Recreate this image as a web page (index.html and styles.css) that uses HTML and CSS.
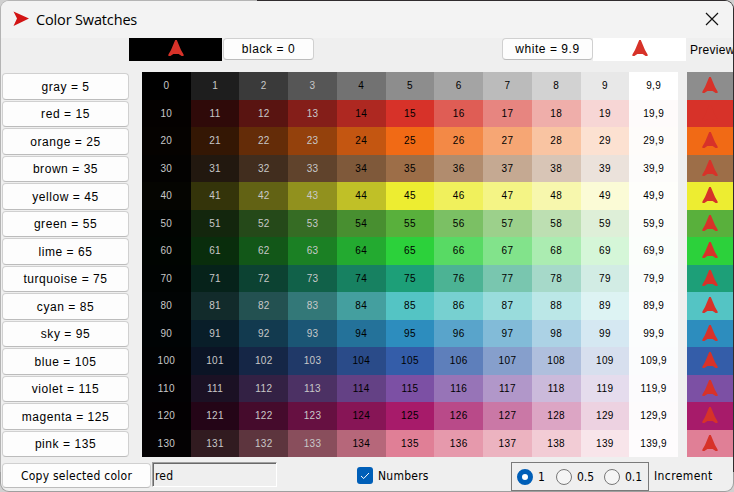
FILE: index.html
```html
<!DOCTYPE html>
<html lang="en">
<head>
<meta charset="utf-8">
<title>Color Swatches</title>
<link rel="stylesheet" href="styles.css">
</head>
<body>
<svg class="defs" width="0" height="0" aria-hidden="true">
  <symbol id="turtle" viewBox="0 0 16 16"><path d="M7.2 0H8.8L13 10L15.6 14.6V16H13.6L10.6 14H5.4L2.4 16H0.4V14.6L3 10Z"/></symbol>
</svg>
<div class="window">
  <header class="titlebar">
    <svg class="app-icon" width="16" height="16" viewBox="0 0 16 16"><path d="M0.5 0.5L16 7.5L0.5 15L4 7.5Z"/></svg>
    <h1>Color Swatches</h1>
    <svg class="close" width="14" height="14" viewBox="0 0 14 14"><path d="M1 1L13 13M13 1L1 13"/></svg>
  </header>
  <div class="top-row">
    <div class="strip strip-black"><svg class="turtle"><use href="#turtle"/></svg></div>
    <button class="btn">black = 0</button>
    <span class="spacer"></span>
    <button class="btn">white = 9.9</button>
    <div class="strip strip-white"><svg class="turtle"><use href="#turtle"/></svg></div>
    <span class="preview-label">Preview</span>
  </div>
  <main class="main">
    <div class="names" id="names"></div>
    <div class="swatches" id="swatches"></div>
    <div class="previews" id="previews"></div>
  </main>
  <footer class="bottom">
    <button class="btn copy">Copy selected color</button>
    <div class="field">red</div>
    <div class="numbers">
      <svg width="16" height="17" viewBox="0 0 16 17"><rect width="16" height="17" rx="3" fill="#005fb8"/><path d="M4 9L6.7 11.5L12 6" fill="none" stroke="#fff"/></svg>
      <span>Numbers</span>
    </div>
    <div class="radios">
      <i class="radio on"></i><span class="r1">1</span>
      <i class="radio"></i><span class="r2">0.5</span>
      <i class="radio"></i><span class="r3">0.1</span>
    </div>
    <span class="increment">Increment</span>
  </footer>
</div>
<script src="swatches.js"></script>
</body>
</html>
```
FILE: styles.css
```css
* { box-sizing: border-box; }
body {
  margin: 0;
  width: 734px;
  height: 492px;
  overflow: hidden;
  background: #d0d0d0;
  font: 12px/14px "DejaVu Sans Condensed", "DejaVu Sans", sans-serif;
  color: #000;
}
.defs { position: absolute; }
.window {
  width: 734px;
  height: 492px;
  overflow: hidden;
  border: 1px solid transparent;
  border-radius: 9px;
  background:
    linear-gradient(#efefef, #efefef) padding-box,
    linear-gradient(#9f9f9f, #9f9f9f) bottom / 100% 20px no-repeat border-box,
    linear-gradient(90deg, #b4b4b4 257px, #302c2e 257px) border-box;
}
.titlebar {
  display: flex;
  align-items: center;
  height: 37px;
  padding: 0 14px 0 12px;
  background: #f3f3f3;
}
.app-icon { margin-top: -1px; fill: #d21414; }
.titlebar h1 {
  flex: 1;
  margin: 0 0 0 7px;
  font: 14.5px/20px "Open Sans", "Noto Sans", sans-serif;
  letter-spacing: -0.15px;
}
.close { margin-top: -1px; fill: none; stroke: #111; stroke-width: 1.2; }
.top-row { display: flex; height: 34px; padding-left: 128px; }
.top-row > * { flex-shrink: 0; }
.strip { display: flex; justify-content: center; width: 93px; height: 23px; padding-top: 2px; }
.strip-black { background: #000; margin-right: 1px; }
.strip-white { background: #fff; }
.turtle { display: block; width: 16px; height: 16px; fill: #d73229; }
.btn {
  width: 91px;
  height: 22px;
  padding: 0;
  background: #fdfdfd;
  border: 1px solid #d0d0d0;
  border-bottom-color: #bcbcbc;
  border-radius: 4px;
  font: 12px/14px "Liberation Sans", sans-serif;
  letter-spacing: 0.55px;
  white-space: nowrap;
}
.spacer { width: 188px; }
.preview-label {
  padding: 5px 0 0 4px;
  font: 12px/14px "Liberation Sans", sans-serif;
  letter-spacing: 0.3px;
  white-space: nowrap;
}
.main { display: flex; height: 385px; }
.names { width: 127px; margin: 1px 13px 0 1px; display: grid; grid-template-rows: repeat(14, 27.5px); }
.names .btn { width: 127px; height: 26.5px; padding-top: 1px; }
.swatches {
  width: 536px;
  display: grid;
  grid-template-columns: repeat(11, 1fr);
  grid-template-rows: repeat(14, 27.5px);
  font: 10px/27px "Liberation Sans", sans-serif;
  letter-spacing: 0.35px;
  text-align: center;
}
.cell.dark { color: #c8c8c8; }
.previews { width: 46px; margin-left: 9px; display: grid; grid-template-rows: repeat(14, 27.5px); }
.preview { padding: 5px 0 0 15px; }
.bottom { display: flex; height: 35px; padding: 5px 0 0 1px; }
.bottom .copy {
  width: 149px;
  height: 25px;
  margin-top: 1px;
  font: inherit;
  letter-spacing: 0.25px;
}
.field {
  width: 125px;
  height: 25px;
  margin-left: 1px;
  padding: 6px 0 0 2px;
  border: 1px solid;
  border-color: #a0a0a0 #fff #fff #a0a0a0;
  box-shadow: inset 1px 1px #696969;
  letter-spacing: 0.2px;
}
.numbers { display: flex; gap: 5px; width: 154px; padding-top: 5px; margin-left: 80px; letter-spacing: 0.25px; }
.numbers span { margin-top: 2px; }
.radios {
  display: flex;
  align-items: center;
  width: 138px;
  height: 29px;
  padding-left: 5px;
  border: 1px solid #7a7a7a;
}
.radio { width: 16px; height: 16px; border: 1px solid #777; border-radius: 50%; background: #f5f5f5; }
.radio.on { border: 5px solid #005fb8; background: #fff; }
.r1 { width: 18px; margin-left: 5px; }
.r2 { width: 27px; margin-left: 5px; }
.r3 { margin-left: 5px; }
.increment { margin: 7px 0 0 5px; letter-spacing: 0.4px; }
```
FILE: swatches.js
```js
const hues = [
  ["gray", [141, 141, 141]], ["red", [215, 50, 41]], ["orange", [241, 106, 21]],
  ["brown", [157, 110, 72]], ["yellow", [237, 237, 49]], ["green", [89, 176, 60]],
  ["lime", [44, 209, 59]], ["turquoise", [29, 159, 120]], ["cyan", [84, 196, 196]],
  ["sky", [45, 141, 190]], ["blue", [52, 93, 169]], ["violet", [124, 80, 164]],
  ["magenta", [167, 27, 106]], ["pink", [224, 127, 150]]
];
const shades = [0, 1, 2, 3, 4, 5, 6, 7, 8, 9, 9.9];

function shade(base, s) {
  const step = (s * 10 - 50) / 50.48 + 0.012;
  const rgb = base.map(c => Math.floor(step < 0 ? c + c * step : c + (255 - c) * step));
  return `rgb(${rgb.join(",")})`;
}

let names = "", cells = "", previews = "";
hues.forEach(([name, base], i) => {
  names += `<button class="btn">${name} = ${i * 10 + 5}</button>`;
  shades.forEach(s => {
    const bg = s === 5 ? `rgb(${base})` : i === 0 && (s === 0 || s === 9.9) ? (s ? "#fff" : "#000") : shade(base, s);
    const label = String(s === 9.9 ? (i * 10 + 9) + ",9" : i * 10 + s);
    cells += `<div class="cell${s < 4 ? " dark" : ""}" style="background:${bg}">${label}</div>`;
  });
  previews += `<div class="preview" style="background:rgb(${base})"><svg class="turtle"><use href="#turtle"/></svg></div>`;
});
document.getElementById("names").innerHTML = names;
document.getElementById("swatches").innerHTML = cells;
document.getElementById("previews").innerHTML = previews;
```
